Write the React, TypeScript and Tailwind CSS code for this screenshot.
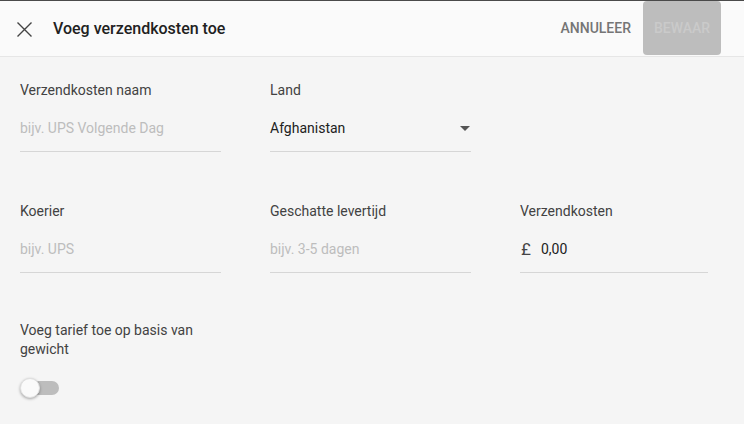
function Field({
  label,
  placeholder,
  value,
  prefix,
  select,
  className = "w-[201px]",
}: {
  label: string
  placeholder?: string
  value?: string
  prefix?: string
  select?: boolean
  className?: string
}) {
  return (
    <div className={className}>
      <div className="h-5 text-[14px] leading-5 text-[#424242]">{label}</div>
      <div className="mt-2 flex h-[44px] items-start border-b border-[#d6d6d6] pt-[10px] text-[14px] leading-5">
        {prefix && (
          <span className="mr-[10px] ml-px text-[17px] leading-5 text-[#444]">{prefix}</span>
        )}
        {value ? (
          <span className="flex-1 text-[#212121]">{value}</span>
        ) : (
          <span className="flex-1 text-[#bdbdbd]">{placeholder}</span>
        )}
        {select && (
          <svg width="10" height="5" viewBox="0 0 10 5" className="mt-[8px] mr-[1px]" aria-hidden>
            <path d="M0 0h10L5 5z" fill="#555" />
          </svg>
        )}
      </div>
    </div>
  )
}

export default function App() {
  return (
    <div className="h-[424px] w-[744px] overflow-hidden border-t border-[#4a4a4a] bg-[#f5f5f5] font-['Roboto',sans-serif]">
      <div className="flex h-[56px] items-center border-b border-[#e6e6e6] bg-[#fafafa] pr-[23px] pl-[17px]">
        <svg width="15" height="15" viewBox="0 0 15 15" className="mt-[1px]" aria-hidden>
          <path d="M0.5 0.5L14.5 14.5M14.5 0.5L0.5 14.5" stroke="#444" strokeWidth="1.4" fill="none" />
        </svg>
        <h1 className="ml-[21px] flex-1 text-[16px] font-medium text-[#212121]">
          Voeg verzendkosten toe
        </h1>
        <button type="button" className="mr-[12px] text-[14px] font-medium text-[#757575]">
          ANNULEER
        </button>
        <button
          type="button"
          disabled
          className="-mt-[1px] h-[54px] w-[78px] rounded-[4px] bg-[#bdbdbd] text-[14px] font-medium text-[#cacaca]"
        >
          BEWAAR
        </button>
      </div>

      <div className="px-5 pt-[23px]">
        <div className="flex gap-[49px]">
          <Field label="Verzendkosten naam" placeholder="bijv. UPS Volgende Dag" />
          <Field label="Land" value="Afghanistan" select />
        </div>
        <div className="mt-[49px] flex gap-[49px]">
          <Field label="Koerier" placeholder="bijv. UPS" />
          <Field label="Geschatte levertijd" placeholder="bijv. 3-5 dagen" />
          <Field label="Verzendkosten" value="0,00" prefix="£" className="w-[188px]" />
        </div>

        <div className="mt-[48px] w-[200px] text-[14px] leading-[19px] text-[#424242]">
          Voeg tarief toe op basis van gewicht
        </div>
        <div className="relative mt-[19px] h-5 w-10">
          <div className="absolute top-[3px] left-[4px] h-[14px] w-[35px] rounded-full bg-[#bdbdbd]" />
          <div className="absolute top-0 left-0 size-5 rounded-full border border-[#e0e0e0] bg-[#fafafa] shadow-[0_1px_3px_rgba(0,0,0,0.35)]" />
        </div>
      </div>
    </div>
  )
}
